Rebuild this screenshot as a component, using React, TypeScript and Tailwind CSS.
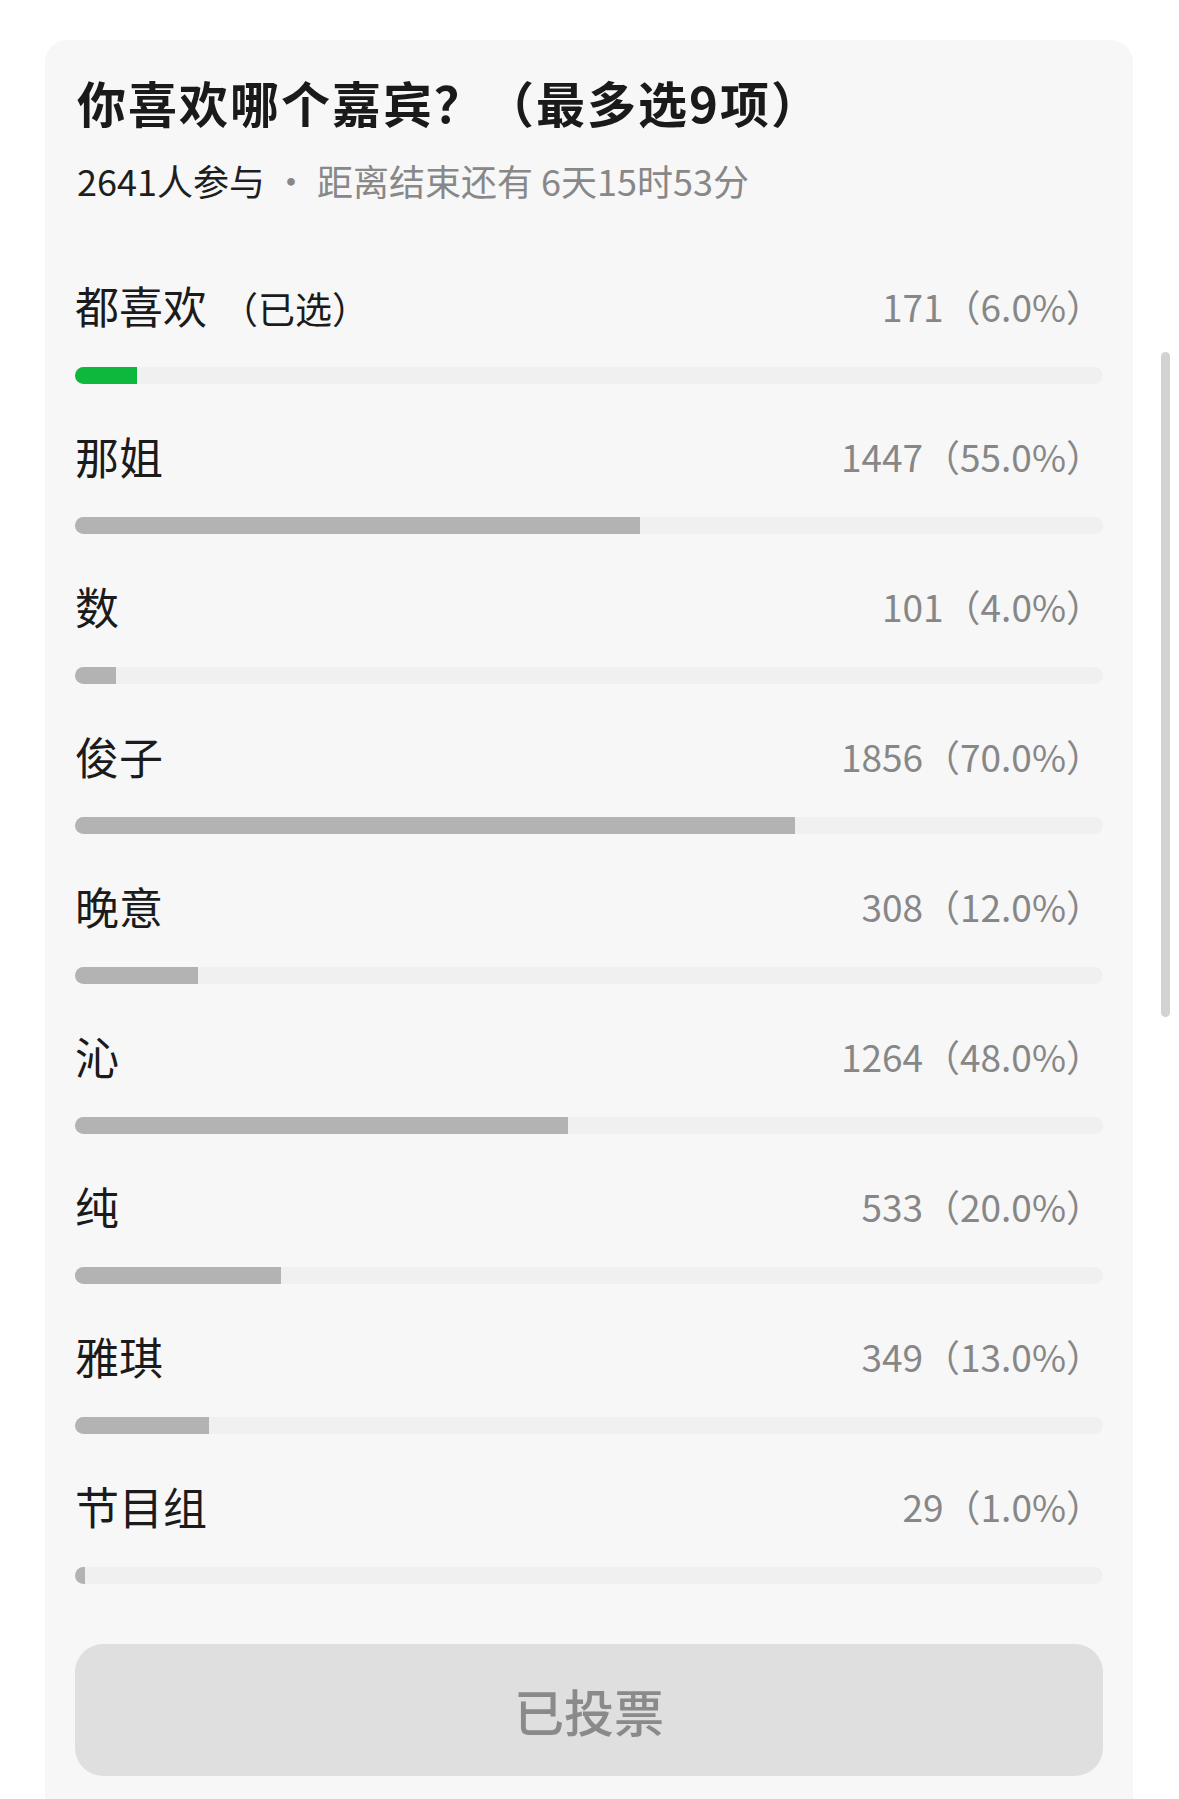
import React from "react";

type Option = {
  name: string;
  count: number;
  pct: number;
  selected?: boolean;
};

const options: Option[] = [
  { name: "都喜欢", count: 171, pct: 6, selected: true },
  { name: "那姐", count: 1447, pct: 55 },
  { name: "数", count: 101, pct: 4 },
  { name: "俊子", count: 1856, pct: 70 },
  { name: "晚意", count: 308, pct: 12 },
  { name: "沁", count: 1264, pct: 48 },
  { name: "纯", count: 533, pct: 20 },
  { name: "雅琪", count: 349, pct: 13 },
  { name: "节目组", count: 29, pct: 1 },
];

const font = { fontFamily: '"Noto Sans CJK SC", "Noto Sans", sans-serif' };

function OptionRow({ opt }: { opt: Option }) {
  return (
    <div className="flex flex-col">
      <div className="flex h-[60px] items-center justify-between pb-[6px]">
        <div className="flex items-baseline text-[44px] leading-[54px] text-[#1b1b1b]">
          <span>{opt.name}</span>
          {opt.selected && (
            <span className="ml-[14px] text-[37px] text-[#1b1b1b]">（已选）</span>
          )}
        </div>
        <div className="text-[37px] leading-[54px] text-[#878787]">
          {opt.count}（{opt.pct.toFixed(1)}%）
        </div>
      </div>
      <div className="mt-[28px] h-[17px] w-full rounded-full bg-[#f0f0f0]">
        <div
          className={
            "h-full rounded-l-full " +
            (opt.selected ? "bg-[#0db83c]" : "bg-[#b3b3b3]")
          }
          style={{ width: `${opt.pct}%` }}
        />
      </div>
    </div>
  );
}

export default function App() {
  return (
    <div className="relative h-[1799px] overflow-hidden bg-white" style={font}>
      <div className="ml-[45px] mt-[40px] w-[1088px] rounded-[22px] bg-[#f7f7f7] px-[30px] pt-[32px] pb-[60px]">
        <h1 className="pl-[2px] text-[49px] font-bold leading-[60px] tracking-[2px] text-[#1a1a1a]">
          你喜欢哪个嘉宾？（最多选9项）
        </h1>
        <p className="mt-[26px] pl-[2px] text-[36px] leading-[44px]">
          <span className="text-[#1e1e1e]">2641人参与</span>
          <span className="text-[#888888]"> · 距离结束还有 6天15时53分</span>
        </p>

        <div className="mt-[77px] flex flex-col gap-[45px]">
          {options.map((opt) => (
            <OptionRow key={opt.name} opt={opt} />
          ))}
        </div>

        <button className="mt-[60px] flex h-[132px] w-full items-center justify-center rounded-[28px] bg-[#dfdfdf] text-[50px] font-medium text-[#8a8a8a]">
          已投票
        </button>
      </div>

      {/* overlay scrollbar */}
      <div className="absolute left-[1161px] top-[352px] h-[665px] w-[9px] rounded-full bg-[#d2d2d2]" />
    </div>
  );
}
